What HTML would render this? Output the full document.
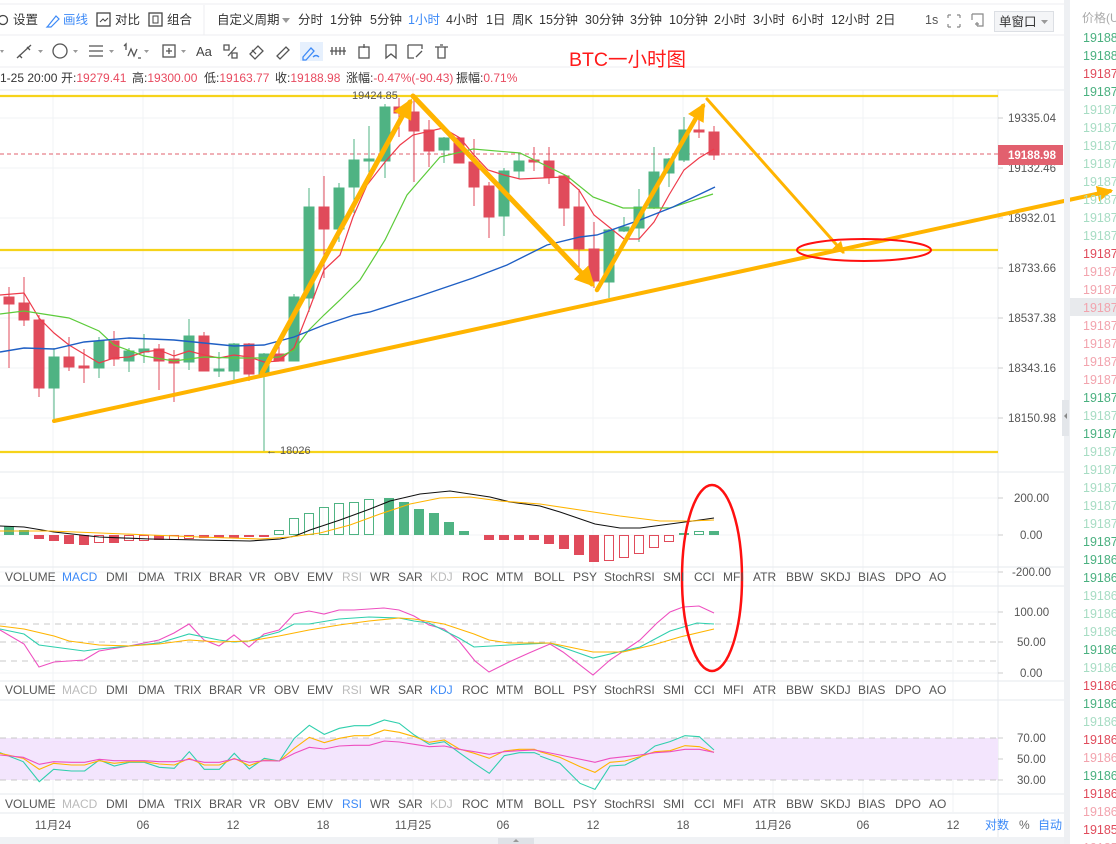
<!DOCTYPE html>
<html><head><meta charset="utf-8"><style>
html,body{margin:0;padding:0;background:#fff;}
svg{display:block;font-family:"Liberation Sans","Noto Sans CJK SC",sans-serif;}
</style></head><body>
<svg width="1116" height="844" viewBox="0 0 1116 844" xmlns="http://www.w3.org/2000/svg">
<defs>
<marker id="ah" viewBox="0 0 10 10" refX="8" refY="5" markerWidth="4" markerHeight="4" orient="auto"><path d="M0,0 L10,5 L0,10 z" fill="#ffb400"/></marker>
</defs>
<rect width="1116" height="844" fill="#fff"/>
<!-- top strip & toolbar -->
<line x1="0" y1="4" x2="1064" y2="4" stroke="#eceef1"/>
<line x1="0" y1="35" x2="1064" y2="35" stroke="#eceef1"/>
<line x1="0" y1="67" x2="1064" y2="67" stroke="#eceef1"/>
<line x1="204" y1="5" x2="204" y2="35" stroke="#eceef1"/>
<g font-size="12.5" fill="#333">
<circle cx="3" cy="20" r="4.5" fill="none" stroke="#444" stroke-width="1.3"/>
<text x="13" y="24">设置</text>
<path d="M48 26 L56 16 L59 19 L51 27 L47 27 Z" fill="none" stroke="#3d8af7" stroke-width="1.2"/>
<text x="63" y="24" fill="#3d8af7">画线</text>
<rect x="97" y="13" width="13" height="13" fill="none" stroke="#444" stroke-width="1.3"/><path d="M100 22 l3-3 2 2 3-3" stroke="#444" fill="none"/>
<text x="115" y="24">对比</text>
<rect x="149" y="13" width="13" height="13" fill="none" stroke="#444" stroke-width="1.3"/><rect x="153" y="16" width="5" height="7" fill="none" stroke="#444"/>
<text x="167" y="24">组合</text>
<text x="217" y="24">自定义周期</text>
<path d="M282 18 h8 l-4 5z" fill="#999"/>
<text x="298" y="24">分时</text>
<text x="330" y="24">1分钟</text>
<text x="370" y="24">5分钟</text>
<text x="408" y="24" fill="#3d8af7">1小时</text>
<text x="446" y="24">4小时</text>
<text x="486" y="24">1日</text>
<text x="512" y="24">周K</text>
<text x="539" y="24">15分钟</text>
<text x="585" y="24">30分钟</text>
<text x="630" y="24">3分钟</text>
<text x="669" y="24">10分钟</text>
<text x="714" y="24">2小时</text>
<text x="753" y="24">3小时</text>
<text x="792" y="24">6小时</text>
<text x="831" y="24">12小时</text>
<text x="876" y="24">2日</text>
<text x="925" y="24" fill="#555">1s</text>
</g>
<path d="M948 15 h3 M948 15 v3 M960 15 h-3 M960 15 v3 M948 27 h3 M948 27 v-3 M960 27 h-3 M960 27 v-3" stroke="#888" stroke-width="1.2" fill="none"/>
<path d="M972 14 h11 v12 h-6 M972 14 v6 M975 24 h4 M977 22 v4" stroke="#888" stroke-width="1.2" fill="none"/>
<rect x="994.5" y="11.5" width="59" height="20" fill="#f4f5f7" stroke="#dcdfe4"/>
<text x="999" y="26" font-size="12.5" fill="#333">单窗口</text>
<path d="M1041 20 h7 l-3.5 4z" fill="#999"/>
<!-- row2 icons -->
<g stroke="#555" stroke-width="1.3" fill="none">
<path d="M0 50 h4 l-2 3z" fill="#999" stroke="none"/>
<path d="M17 58 L31 45 M19 55 l3 3 M27 47 l3 3"/>
<path d="M38 50 h5 l-2.5 3z" fill="#999" stroke="none"/>
<circle cx="60" cy="51" r="7"/>
<path d="M73 50 h5 l-2.5 3z" fill="#999" stroke="none"/>
<path d="M89 46 h14 M89 51 h14 M89 56 h14"/>
<path d="M109 50 h5 l-2.5 3z" fill="#999" stroke="none"/>
<path d="M124 46 l2-2 v6 M128 56 l3-7 3 7 3-7 M138 58 h3"/>
<path d="M144 50 h5 l-2.5 3z" fill="#999" stroke="none"/>
<rect x="163" y="45" width="12" height="12"/><path d="M169 48 v6 M166 51 h6"/>
<path d="M181 50 h5 l-2.5 3z" fill="#999" stroke="none"/>
<path d="M224 45 h5 v5 h-5z M232 53 h5 v5 h-5z M228 56 l8 -9"/>
<path d="M250 54 l8-8 5 5 -8 8z M252 50 l4 4"/>
<path d="M277 56 l9-9 3 3 -9 9z"/>
<rect x="300" y="42" width="23" height="19" fill="#e6f0fd" stroke="none"/>
<path d="M303 57 l8-9 3 3 -8 9 h-3z M313 57 q3-3 6 0" stroke="#3d8af7"/>
<path d="M332 47 v8 M336 47 v8 M340 47 v8 M344 47 v8 M330 51 h16"/>
<rect x="359" y="47" width="10" height="11"/><path d="M364 44 v4"/>
<path d="M386 45 h10 v13 l-5-4 -5 4z"/>
<path d="M408 45 h14 v4 M408 45 v13 h6 M416 57 l6-6"/>
<path d="M435 47 h13 M438 47 v11 h7 v-11 M440 45 h3"/>
</g>
<text x="196" y="56" font-size="13" fill="#444">Aa</text>
<!-- info row -->
<g font-size="12" fill="#333">
<text x="0" y="82">1-25 20:00</text>
<text x="61" y="82">开:<tspan fill="#e84a5f">19279.41</tspan></text>
<text x="132" y="82">高:<tspan fill="#e84a5f">19300.00</tspan></text>
<text x="204" y="82">低:<tspan fill="#e84a5f">19163.77</tspan></text>
<text x="275" y="82">收:<tspan fill="#e84a5f">19188.98</tspan></text>
<text x="346" y="82">涨幅:<tspan fill="#e84a5f">-0.47%(-90.43)</tspan></text>
<text x="456" y="82">振幅:<tspan fill="#e84a5f">0.71%</tspan></text>
</g>
<text x="569" y="66" font-size="19.5" fill="#ff1a1a">BTC一小时图</text>

<!-- grid -->
<g stroke="#f1f3f6" stroke-width="1">
<path d="M0 118H998M0 168H998M0 218H998M0 268H998M0 318H998M0 368H998M0 418H998"/>
<path d="M53 90V812M143 90V812M233 90V812M323 90V812M413 90V812M503 90V812M593 90V812M683 90V812M773 90V812M863 90V812M953 90V812"/>
<path d="M0 498H998M0 535H998M0 572H998M0 612H998M0 673H998M0 759H998"/>
</g>
<!-- panel separators -->
<g stroke="#e6e9ee" stroke-width="1">
<path d="M0 90H1064M0 472H1064M0 567H1064M0 586H1064M0 681H1064M0 700H1064M0 794H1064M0 813H1064"/>
<path d="M998 90V838"/>
<path d="M998 118h5M998 168h5M998 218h5M998 268h5M998 318h5M998 368h5M998 418h5M998 498h5M998 535h5M998 572h5M998 612h5M998 642h5M998 673h5M998 738h5M998 759h5M998 780h5" stroke="#ccc"/>
</g>
<!-- right axis labels -->
<g font-size="11.5" fill="#555">
<text x="1008" y="122">19335.04</text>
<text x="1008" y="172">19132.46</text>
<text x="1008" y="222">18932.01</text>
<text x="1008" y="272">18733.66</text>
<text x="1008" y="322">18537.38</text>
<text x="1008" y="372">18343.16</text>
<text x="1008" y="422">18150.98</text>
<text x="1014" y="502">200.00</text>
<text x="1020" y="539">0.00</text>
<text x="1012" y="576">-200.00</text>
<text x="1014" y="616">100.00</text>
<text x="1017" y="646">50.00</text>
<text x="1020" y="677">0.00</text>
<text x="1017" y="742">70.00</text>
<text x="1017" y="763">50.00</text>
<text x="1017" y="784">30.00</text>
</g>
<!-- yellow lines -->
<g stroke="#f6d31a" stroke-width="2.2">
<path d="M0 96H998M0 250H998M0 452H998"/>
</g>
<line x1="0" y1="154" x2="998" y2="154" stroke="#e2606e" stroke-dasharray="4,3"/>
<rect x="998" y="145" width="65" height="20" fill="#e2606e"/>
<text x="1008" y="159" font-size="11.5" font-weight="bold" fill="#fff">19188.98</text>
<text x="352" y="99" font-size="11" fill="#555">19424.85</text>
<text x="266" y="454" font-size="11" fill="#555">← 18026</text>

<!-- candles -->
<g stroke-width="1">
<g stroke="#e04b5b" fill="#e04b5b">
<line x1="9" y1="287" x2="9" y2="368"/><rect x="4" y="297" width="10" height="7"/>
<line x1="24" y1="277" x2="24" y2="326"/><rect x="19" y="303" width="10" height="17"/>
<line x1="39" y1="315" x2="39" y2="397"/><rect x="34" y="320" width="10" height="68"/>
<line x1="69" y1="337" x2="69" y2="371"/><rect x="64" y="357" width="10" height="10"/>
<line x1="84" y1="349" x2="84" y2="383"/><rect x="79" y="366" width="10" height="2"/>
<line x1="114" y1="331" x2="114" y2="366"/><rect x="109" y="341" width="10" height="18"/>
<line x1="159" y1="344" x2="159" y2="390"/><rect x="154" y="349" width="10" height="12"/>
<line x1="174" y1="350" x2="174" y2="402"/><rect x="169" y="359" width="10" height="4"/>
<line x1="204" y1="332" x2="204" y2="371"/><rect x="199" y="336" width="10" height="35"/>
<line x1="249" y1="343" x2="249" y2="381"/><rect x="244" y="344" width="10" height="30"/>
<line x1="279" y1="340" x2="279" y2="361"/><rect x="274" y="354" width="10" height="7"/>
<line x1="324" y1="176" x2="324" y2="278"/><rect x="319" y="207" width="10" height="22"/>
<line x1="399" y1="98" x2="399" y2="137"/><rect x="394" y="107" width="10" height="6"/>
<line x1="414" y1="97" x2="414" y2="182"/><rect x="409" y="112" width="10" height="19"/>
<line x1="429" y1="120" x2="429" y2="167"/><rect x="424" y="130" width="10" height="21"/>
<line x1="459" y1="137" x2="459" y2="163"/><rect x="454" y="138" width="10" height="25"/>
<line x1="474" y1="139" x2="474" y2="206"/><rect x="469" y="162" width="10" height="25"/>
<line x1="489" y1="182" x2="489" y2="238"/><rect x="484" y="186" width="10" height="31"/>
<line x1="534" y1="147" x2="534" y2="171"/><rect x="529" y="160" width="10" height="2"/>
<line x1="549" y1="147" x2="549" y2="184"/><rect x="544" y="161" width="10" height="16"/>
<line x1="564" y1="174" x2="564" y2="226"/><rect x="559" y="176" width="10" height="32"/>
<line x1="579" y1="189" x2="579" y2="268"/><rect x="574" y="207" width="10" height="42"/>
<line x1="594" y1="222" x2="594" y2="288"/><rect x="589" y="249" width="10" height="32"/>
<line x1="699" y1="116" x2="699" y2="138"/><rect x="694" y="130" width="10" height="2"/>
<line x1="714" y1="126" x2="714" y2="160"/><rect x="709" y="132" width="10" height="23"/>
</g>
<g stroke="#4fb383" fill="#4fb383">
<line x1="54" y1="348" x2="54" y2="421"/><rect x="49" y="357" width="10" height="31"/>
<line x1="99" y1="337" x2="99" y2="378"/><rect x="94" y="341" width="10" height="27"/>
<line x1="129" y1="348" x2="129" y2="372"/><rect x="124" y="351" width="10" height="10"/>
<line x1="144" y1="334" x2="144" y2="363"/><rect x="139" y="349" width="10" height="3"/>
<line x1="189" y1="319" x2="189" y2="370"/><rect x="184" y="336" width="10" height="26"/>
<line x1="219" y1="352" x2="219" y2="377"/><rect x="214" y="369" width="10" height="2"/>
<line x1="234" y1="343" x2="234" y2="383"/><rect x="229" y="344" width="10" height="27"/>
<line x1="264" y1="353" x2="264" y2="451"/><rect x="259" y="354" width="10" height="20"/>
<line x1="294" y1="294" x2="294" y2="361"/><rect x="289" y="297" width="10" height="64"/>
<line x1="309" y1="188" x2="309" y2="312"/><rect x="304" y="207" width="10" height="91"/>
<line x1="339" y1="183" x2="339" y2="242"/><rect x="334" y="188" width="10" height="41"/>
<line x1="354" y1="139" x2="354" y2="213"/><rect x="349" y="160" width="10" height="27"/>
<line x1="369" y1="126" x2="369" y2="175"/><rect x="364" y="159" width="10" height="2"/>
<line x1="385" y1="104" x2="385" y2="178"/><rect x="380" y="107" width="10" height="54"/>
<line x1="444" y1="137" x2="444" y2="163"/><rect x="439" y="138" width="10" height="12"/>
<line x1="504" y1="168" x2="504" y2="236"/><rect x="499" y="171" width="10" height="45"/>
<line x1="519" y1="153" x2="519" y2="179"/><rect x="514" y="161" width="10" height="10"/>
<line x1="609" y1="229" x2="609" y2="298"/><rect x="604" y="230" width="10" height="52"/>
<line x1="624" y1="217" x2="624" y2="232"/><rect x="619" y="227" width="10" height="4"/>
<line x1="639" y1="189" x2="639" y2="242"/><rect x="634" y="207" width="10" height="21"/>
<line x1="654" y1="147" x2="654" y2="209"/><rect x="649" y="172" width="10" height="36"/>
<line x1="669" y1="158" x2="669" y2="187"/><rect x="664" y="159" width="10" height="14"/>
<line x1="684" y1="117" x2="684" y2="162"/><rect x="679" y="130" width="10" height="30"/>
</g>
</g>
<!-- MAs -->
<g fill="none" stroke-width="1.2">
<polyline stroke="#ee3b4b" points="0,295 24,293 39,318 54,333 69,345 99,363 114,358 129,357 144,352 159,350 174,356 189,351 204,355 219,358 234,355 249,357 264,362 279,361 294,348 309,310 324,270 340,255 353,217 367,185 385,162 400,145 413,135 443,128 460,138 474,155 488,170 504,175 520,179 564,177 579,190 594,215 624,239 639,239 654,222 669,195 684,170 699,158 714,149"/>
<polyline stroke="#5ccb3a" points="0,314 24,311 69,318 99,331 114,345 144,356 174,361 204,357 234,358 264,358 279,357 294,350 309,330 324,315 340,300 360,280 385,240 407,195 440,157 473,149 520,153 567,176 593,197 623,208 670,208 713,194"/>
<polyline stroke="#1f5fc4" stroke-width="1.4" points="0,352 24,348 54,349 84,342 129,338 174,340 204,343 234,346 264,345 294,337 324,325 354,315 370,312 417,297 473,278 507,265 547,245 580,237 597,235 640,220 673,207 715,187"/>
</g>
<!-- orange drawings -->
<g stroke="#ffb400" fill="none" stroke-linecap="round">
<line x1="54" y1="421" x2="1110" y2="191" stroke-width="4" marker-end="url(#ah)"/>
<line x1="262" y1="373" x2="410" y2="102" stroke-width="5" marker-end="url(#ah)"/>
<line x1="413" y1="96" x2="592" y2="284" stroke-width="5" marker-end="url(#ah)"/>
<line x1="597" y1="290" x2="703" y2="106" stroke-width="4.5" marker-end="url(#ah)"/>
<line x1="707" y1="99" x2="843" y2="252" stroke-width="3" marker-end="url(#ah)"/>
</g>
<ellipse cx="864" cy="250" rx="67" ry="11" fill="none" stroke="#ff1010" stroke-width="2"/>

<!-- MACD panel -->
<g>
<g fill="#4fb383">
<rect x="4" y="526" width="10" height="9"/><rect x="19" y="530" width="10" height="5"/>
<rect x="384" y="498" width="10" height="37"/><rect x="399" y="502" width="10" height="33"/><rect x="414" y="509" width="10" height="26"/><rect x="429" y="513" width="10" height="22"/><rect x="444" y="522" width="10" height="13"/><rect x="459" y="531" width="10" height="4"/>
<rect x="679" y="533" width="10" height="2"/><rect x="709" y="531" width="10" height="4"/>
</g>
<g fill="none" stroke="#4fb383">
<rect x="274.5" y="530.5" width="9" height="4"/><rect x="289.5" y="518.5" width="9" height="16"/><rect x="304.5" y="513.5" width="9" height="21"/><rect x="319.5" y="507.5" width="9" height="27"/><rect x="334.5" y="503.5" width="9" height="31"/><rect x="349.5" y="502.5" width="9" height="32"/><rect x="364.5" y="499.5" width="9" height="35"/><rect x="694.5" y="531.5" width="9" height="3"/>
</g>
<g fill="#e04b5b">
<rect x="34" y="535" width="10" height="4"/><rect x="49" y="535" width="10" height="6"/><rect x="64" y="535" width="10" height="9"/><rect x="79" y="535" width="10" height="10"/><rect x="109" y="535" width="10" height="8"/><rect x="154" y="535" width="10" height="5"/><rect x="199" y="535" width="10" height="3"/><rect x="214" y="535" width="10" height="3"/><rect x="229" y="535" width="10" height="3"/><rect x="244" y="535" width="10" height="2"/><rect x="259" y="535" width="10" height="2"/>
<rect x="484" y="535" width="10" height="5"/><rect x="499" y="535" width="10" height="5"/><rect x="514" y="535" width="10" height="5"/><rect x="529" y="535" width="10" height="5"/><rect x="544" y="535" width="10" height="9"/><rect x="559" y="535" width="10" height="14"/><rect x="574" y="535" width="10" height="20"/><rect x="589" y="535" width="10" height="27"/>
</g>
<g fill="none" stroke="#e04b5b">
<rect x="94.5" y="535.5" width="9" height="7"/><rect x="124.5" y="535.5" width="9" height="5"/><rect x="139.5" y="535.5" width="9" height="5"/><rect x="169.5" y="535.5" width="9" height="4"/><rect x="184.5" y="535.5" width="9" height="3"/>
<rect x="604.5" y="535.5" width="9" height="25"/><rect x="619.5" y="535.5" width="9" height="22"/><rect x="634.5" y="535.5" width="9" height="18"/><rect x="649.5" y="535.5" width="9" height="12"/><rect x="664.5" y="535.5" width="9" height="6"/>
</g>
<polyline fill="none" stroke="#111" stroke-width="1.1" points="0,526 24,527 54,532 99,537 150,539 200,540 250,541 280,539 295,536 310,530 340,520 370,509 390,501 420,494 450,491 470,494 490,497 510,502 540,506 560,512 595,524 620,528 640,528 670,524 700,520 714,518"/>
<polyline fill="none" stroke="#ffb400" stroke-width="1.1" points="0,531 50,531 100,533 150,535 200,537 260,539 290,537 320,533 350,525 380,514 410,504 440,498 470,497 500,501 540,504 580,510 620,516 660,521 690,521 714,520"/>
</g>

<!-- KDJ panel -->
<g stroke="#c8c8c8" stroke-dasharray="6,5"><path d="M0 624H998M0 642H998M0 661H998"/></g>
<g fill="none" stroke-width="1.1">
<polyline stroke="#ee4fc0" points="0,630 24,644 39,667 54,662 84,660 99,651 129,646 159,640 174,633 189,624 204,640 219,646 234,635 249,647 264,634 279,630 294,614 309,611 324,614 339,610 354,610 369,609 384,608 399,610 414,616 429,625 444,629 459,641 475,661 489,672 509,662 529,653 550,644 563,652 593,675 610,660 640,640 657,623 670,612 683,607 699,606 714,613"/>
<polyline stroke="#2fcfad" points="0,629 24,634 39,645 84,651 99,649 159,643 189,634 219,640 234,642 249,641 264,636 279,632 294,624 309,624 339,619 369,617 399,618 414,621 429,623 459,638 474,647 509,645 550,643 593,658 640,647 670,631 697,623 714,624"/>
<polyline stroke="#ffb400" points="0,626 24,629 54,636 69,641 99,645 129,646 159,644 189,640 219,642 249,641 279,636 294,633 309,630 339,625 369,621 399,618 414,619 444,624 474,634 489,640 509,643 550,643 593,652 623,652 653,645 680,637 714,629"/>
</g>

<!-- RSI panel -->
<rect x="0" y="738" width="998" height="42" fill="#f3e5fd"/>
<g stroke="#c8c8c8" stroke-dasharray="6,5"><path d="M0 738H998M0 780H998"/></g>
<g fill="none" stroke-width="1.1">
<g transform="translate(0,470) scale(0.35714,0.33333)">
<polyline vector-effect="non-scaling-stroke" stroke="#2fcfad" points="0,848 65,875 110,935 150,898 200,903 237,903 278,870 320,888 362,877 404,877 446,892 488,895 530,845 572,898 614,898 656,850 698,897 740,865 782,873 824,805 866,766 908,793 950,775 992,767 1034,767 1076,750 1118,760 1160,795 1202,823 1244,815 1286,848 1328,880 1370,910 1412,857 1454,848 1496,848 1512,855"/>
<polyline vector-effect="non-scaling-stroke" stroke="#ffb400" points="0,850 65,865 110,898 150,880 200,885 237,885 278,872 320,880 362,875 404,875 446,882 488,885 530,865 572,885 614,885 656,865 698,887 740,870 782,873 824,835 866,802 908,818 950,805 992,797 1034,797 1076,780 1118,787 1160,800 1202,817 1244,810 1286,837 1328,850 1370,865 1412,843 1454,838 1496,838 1512,845"/>
<polyline vector-effect="non-scaling-stroke" stroke="#ee4fc0" points="0,855 65,862 110,883 150,875 200,877 237,877 278,868 320,872 362,872 404,872 446,875 488,875 530,868 572,877 614,877 656,867 698,877 740,872 782,873 824,850 866,832 908,837 950,828 992,826 1034,826 1076,813 1118,816 1160,823 1202,830 1244,828 1286,838 1328,845 1370,853 1412,845 1454,842 1496,840 1512,843"/>
</g>
<g transform="translate(540,470) scale(0.33333)">
<polyline vector-effect="non-scaling-stroke" stroke="#2fcfad" points="0,858 60,880 120,940 165,958 210,888 255,885 300,862 345,828 390,815 435,797 478,800 522,840"/>
<polyline vector-effect="non-scaling-stroke" stroke="#ffb400" points="0,845 60,862 120,890 165,907 210,877 255,873 300,860 345,845 390,842 435,827 478,830 522,847"/>
<polyline vector-effect="non-scaling-stroke" stroke="#ee4fc0" points="0,843 60,855 165,877 210,865 300,855 345,848 390,845 435,838 478,838 522,847"/>
</g>
</g>

<!-- big red ellipse -->
<ellipse cx="712" cy="578" rx="30" ry="93" fill="none" stroke="#ff1010" stroke-width="2.5"/>

<!-- indicator labels -->
<g font-size="12" fill="#555">
<g transform="translate(0,581)">
<text x="5">VOLUME</text><text x="62" fill="#3d8af7">MACD</text><text x="106">DMI</text><text x="138">DMA</text><text x="174">TRIX</text><text x="209">BRAR</text><text x="249">VR</text><text x="274">OBV</text><text x="307">EMV</text><text x="342" fill="#bbb">RSI</text><text x="370">WR</text><text x="398">SAR</text><text x="430" fill="#bbb">KDJ</text><text x="462">ROC</text><text x="496">MTM</text><text x="534">BOLL</text><text x="573">PSY</text><text x="604">StochRSI</text><text x="663">SMI</text><text x="694">CCI</text><text x="723">MFI</text><text x="753">ATR</text><text x="786">BBW</text><text x="820">SKDJ</text><text x="858">BIAS</text><text x="895">DPO</text><text x="929">AO</text>
</g>
<g transform="translate(0,694)">
<text x="5">VOLUME</text><text x="62" fill="#bbb">MACD</text><text x="106">DMI</text><text x="138">DMA</text><text x="174">TRIX</text><text x="209">BRAR</text><text x="249">VR</text><text x="274">OBV</text><text x="307">EMV</text><text x="342" fill="#bbb">RSI</text><text x="370">WR</text><text x="398">SAR</text><text x="430" fill="#3d8af7">KDJ</text><text x="462">ROC</text><text x="496">MTM</text><text x="534">BOLL</text><text x="573">PSY</text><text x="604">StochRSI</text><text x="663">SMI</text><text x="694">CCI</text><text x="723">MFI</text><text x="753">ATR</text><text x="786">BBW</text><text x="820">SKDJ</text><text x="858">BIAS</text><text x="895">DPO</text><text x="929">AO</text>
</g>
<g transform="translate(0,808)">
<text x="5">VOLUME</text><text x="62" fill="#bbb">MACD</text><text x="106">DMI</text><text x="138">DMA</text><text x="174">TRIX</text><text x="209">BRAR</text><text x="249">VR</text><text x="274">OBV</text><text x="307">EMV</text><text x="342" fill="#3d8af7">RSI</text><text x="370">WR</text><text x="398">SAR</text><text x="430" fill="#bbb">KDJ</text><text x="462">ROC</text><text x="496">MTM</text><text x="534">BOLL</text><text x="573">PSY</text><text x="604">StochRSI</text><text x="663">SMI</text><text x="694">CCI</text><text x="723">MFI</text><text x="753">ATR</text><text x="786">BBW</text><text x="820">SKDJ</text><text x="858">BIAS</text><text x="895">DPO</text><text x="929">AO</text>
</g>
</g>
<!-- date axis -->
<g font-size="11.5" fill="#555" text-anchor="middle">
<text x="53" y="829">11月24</text><text x="143" y="829">06</text><text x="233" y="829">12</text><text x="323" y="829">18</text><text x="413" y="829">11月25</text><text x="503" y="829">06</text><text x="593" y="829">12</text><text x="683" y="829">18</text><text x="773" y="829">11月26</text><text x="863" y="829">06</text><text x="953" y="829">12</text>
</g>
<g font-size="12"><text x="985" y="829" fill="#3d8af7">对数</text><text x="1019" y="829" fill="#666">%</text><text x="1038" y="829" fill="#3d8af7">自动</text></g>
<rect x="0" y="837" width="1064" height="7" fill="#f0f2f5"/>
<rect x="498" y="838" width="36" height="6" fill="#dfe2e7"/>
<path d="M513 842 l3-3 3 3z" fill="#999"/>

<!-- right side panel -->
<rect x="1064" y="0" width="6" height="844" fill="#eef0f3"/>
<rect x="1062" y="400" width="7" height="36" fill="#e3e6ea"/>
<path d="M1067 413 l-3 3 3 3z" fill="#888"/>
<rect x="1070" y="298" width="46" height="18" fill="#e8eaed"/>
<text x="1082" y="22" font-size="12" fill="#aaa">价格(U</text>
<g font-size="12.5">
<text x="1083" y="42" fill="#49b07f">19188</text>
<text x="1083" y="60" fill="#49b07f">19188</text>
<text x="1083" y="78" fill="#e04b5b">19187</text>
<text x="1083" y="96" fill="#49b07f">19187</text>
<text x="1083" y="114" fill="#a6dcc3">19187</text>
<text x="1083" y="132" fill="#a6dcc3">19187</text>
<text x="1083" y="150" fill="#a6dcc3">19187</text>
<text x="1083" y="168" fill="#a6dcc3">19187</text>
<text x="1083" y="186" fill="#a6dcc3">19187</text>
<text x="1083" y="204" fill="#a6dcc3">19187</text>
<text x="1083" y="222" fill="#a6dcc3">19187</text>
<text x="1083" y="240" fill="#a6dcc3">19187</text>
<text x="1083" y="258" fill="#e04b5b">19187</text>
<text x="1083" y="276" fill="#f2a3ad">19187</text>
<text x="1083" y="294" fill="#f2a3ad">19187</text>
<text x="1083" y="312" fill="#f2a3ad">19187</text>
<text x="1083" y="330" fill="#f2a3ad">19187</text>
<text x="1083" y="348" fill="#f2a3ad">19187</text>
<text x="1083" y="366" fill="#f2a3ad">19187</text>
<text x="1083" y="384" fill="#f2a3ad">19187</text>
<text x="1083" y="402" fill="#49b07f">19187</text>
<text x="1083" y="420" fill="#a6dcc3">19187</text>
<text x="1083" y="438" fill="#49b07f">19187</text>
<text x="1083" y="456" fill="#a6dcc3">19187</text>
<text x="1083" y="474" fill="#a6dcc3">19187</text>
<text x="1083" y="492" fill="#a6dcc3">19187</text>
<text x="1083" y="510" fill="#a6dcc3">19187</text>
<text x="1083" y="528" fill="#a6dcc3">19187</text>
<text x="1083" y="546" fill="#49b07f">19187</text>
<text x="1083" y="564" fill="#49b07f">19186</text>
<text x="1083" y="582" fill="#49b07f">19186</text>
<text x="1083" y="600" fill="#a6dcc3">19186</text>
<text x="1083" y="618" fill="#a6dcc3">19186</text>
<text x="1083" y="636" fill="#a6dcc3">19186</text>
<text x="1083" y="654" fill="#49b07f">19186</text>
<text x="1083" y="672" fill="#a6dcc3">19186</text>
<text x="1083" y="690" fill="#e04b5b">19186</text>
<text x="1083" y="708" fill="#49b07f">19186</text>
<text x="1083" y="726" fill="#a6dcc3">19186</text>
<text x="1083" y="744" fill="#e04b5b">19186</text>
<text x="1083" y="762" fill="#f2a3ad">19186</text>
<text x="1083" y="780" fill="#49b07f">19186</text>
<text x="1083" y="798" fill="#e04b5b">19186</text>
<text x="1083" y="816" fill="#f2a3ad">19186</text>
<text x="1083" y="834" fill="#e04b5b">19185</text>
<text x="1083" y="852" fill="#f2a3ad">19185</text>
</g>
</svg>
</body></html>
